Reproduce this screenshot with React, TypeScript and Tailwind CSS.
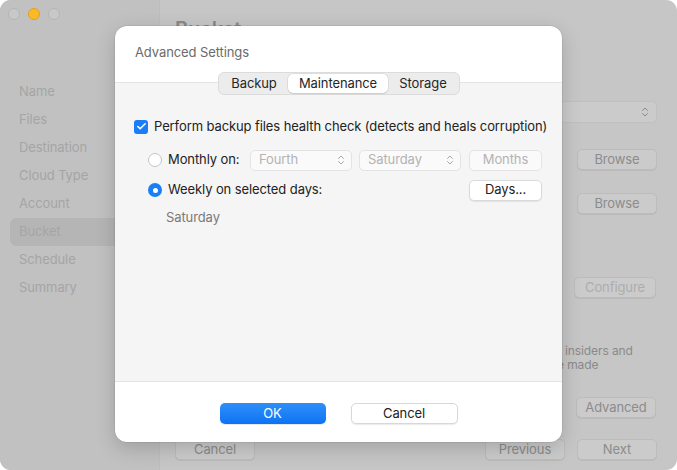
import { ChevronsUpDown, Check } from "lucide-react";

const sidebarItems = ["Name", "Files", "Destination", "Cloud Type", "Account", "Bucket", "Schedule", "Summary"];

function BgButton({ label, className = "", dim = false }: { label: string; className?: string; dim?: boolean }) {
  return (
    <div
      className={
        "flex h-[21px] items-center justify-center rounded-[5px] border border-[#bcbcbc] bg-[#cbcbcb] text-[13px] shadow-[0_1px_0_rgba(0,0,0,0.06)] " +
        (dim ? "text-[#adadad] " : "text-[#8c8c8c] ") +
        className
      }
    >
      {label}
    </div>
  );
}

function Popup({ label, className = "" }: { label: string; className?: string }) {
  return (
    <div
      className={
        "flex h-[21px] items-center justify-between rounded-[5px] border border-[#e3e3e3] bg-[#fafafa] pl-[8px] pr-[4px] text-[13px] text-[#b3b3b3] " +
        className
      }
    >
      <span>{label}</span>
      <ChevronsUpDown size={12} strokeWidth={2} className="text-[#a8a8a8]" />
    </div>
  );
}

function Radio({ on }: { on: boolean }) {
  if (on) {
    return (
      <span className="flex h-[14px] w-[14px] items-center justify-center rounded-full bg-[#1a7ef6]">
        <span className="h-[5px] w-[5px] rounded-full bg-white" />
      </span>
    );
  }
  return <span className="h-[14px] w-[14px] rounded-full border border-[#c4c4c4] bg-white" />;
}

export default function App() {
  return (
    <div className="h-[470px] w-[677px] bg-white font-['Inter','Liberation_Sans',sans-serif] tracking-[-0.1px]">
      <div className="relative flex h-full w-full overflow-hidden rounded-[11px] bg-[#c6c6c6]">
        {/* sidebar */}
        <aside className="flex w-[159px] flex-col bg-[#c1c1c1] px-[10px]">
          <div className="-ml-[2px] flex gap-[8px] pt-[8px]">
            <span className="h-[12px] w-[12px] rounded-full border border-[#b5b5b5] bg-[#c8c8c8]" />
            <span className="h-[12px] w-[12px] rounded-full border border-[#e0a21e] bg-[#fbb928]" />
            <span className="h-[12px] w-[12px] rounded-full border border-[#b5b5b5] bg-[#c8c8c8]" />
          </div>
          <ul className="mt-[58px] flex flex-col">
            {sidebarItems.map((s) => (
              <li
                key={s}
                className={
                  "flex h-[28px] items-center rounded-[6px] pl-[9px] text-[13px] text-[#a5a5a5] " +
                  (s === "Bucket" ? "bg-[#b6b5b6] -mr-[10px] rounded-r-none" : "")
                }
              >
                {s}
              </li>
            ))}
          </ul>
        </aside>

        {/* main (dimmed behind sheet) */}
        <main className="flex flex-1 flex-col border-l border-[#bdbdbd] pl-[15px] pr-[20px]">
          <h1 className="mt-[16px] text-[20px] font-semibold leading-[26px] text-[#8a8a8a]">Bucket</h1>
          <div className="mt-[59px] flex h-[22px] items-center justify-end rounded-[5px] border border-[#c0c0c0] bg-[#cbcbcb] pr-[5px]">
            <ChevronsUpDown size={12} strokeWidth={2} className="text-[#8c8c8c]" />
          </div>
          <div className="mt-[26px] flex justify-end">
            <BgButton label="Browse" className="w-[80px]" />
          </div>
          <div className="mt-[23px] flex justify-end">
            <BgButton label="Browse" className="w-[80px]" />
          </div>
          <div className="mt-[63px] flex justify-end pr-[1px]">
            <BgButton label="Configure" className="w-[82px]" dim />
          </div>
          <div className="mt-[46px] whitespace-nowrap pl-[391px] text-[12px] leading-[14px] text-[#8a8a8a]">
            <div className="-ml-[1px]">insiders and</div>
            <div className="-ml-[9px]">e made</div>
          </div>
          <div className="mt-[25px] flex justify-end pr-[1px]">
            <BgButton label="Advanced" className="w-[80px]" />
          </div>
          <div className="mt-[21px] flex items-center">
            <BgButton label="Cancel" className="w-[80px]" />
            <div className="flex-1" />
            <BgButton label="Previous" className="w-[80px]" />
            <BgButton label="Next" className="ml-[12px] w-[80px]" />
          </div>
        </main>

        {/* sheet */}
        <div className="absolute left-[115px] top-[26px] flex h-[416px] w-[447px] flex-col rounded-[12px] bg-white shadow-[0_6px_20px_rgba(0,0,0,0.18),0_0_0_0.5px_rgba(0,0,0,0.12)]">
          <div className="h-[56px] pl-[20px] pt-[17px] text-[13px] text-[#6b6b6b]">Advanced Settings</div>
          <div className="flex h-[300px] flex-col border-y border-[#e4e4e4] bg-[#f5f5f5] pl-[19px] pr-[20px]">
            <div className="-mt-[11px] ml-[2px] flex self-center rounded-[6px] border border-[#dcdcdc] bg-[#ececec] p-[1px] text-[13px] text-[#262626]">
              <div className="flex h-[19px] w-[68px] items-center justify-center">Backup</div>
              <div className="flex h-[19px] w-[100px] items-center justify-center rounded-[5px] bg-white shadow-[0_0_0_0.5px_rgba(0,0,0,0.12),0_1px_1px_rgba(0,0,0,0.08)]">
                Maintenance
              </div>
              <div className="flex h-[19px] w-[70px] items-center justify-center">Storage</div>
            </div>

            <label className="mt-[22px] flex items-center gap-[6px] whitespace-nowrap text-[13px] text-[#222]">
              <span className="flex h-[14px] w-[14px] shrink-0 items-center justify-center rounded-[3px] bg-[#1a7ef6]">
                <Check size={11} strokeWidth={3.5} className="text-white" />
              </span>
              Perform backup files health check (detects and heals corruption)
            </label>

            <div className="mt-[13px] flex items-center pl-[14px] text-[13px] text-[#222]">
              <Radio on={false} />
              <span className="ml-[6px] w-[82px]">Monthly on:</span>
              <Popup label="Fourth" className="w-[102px]" />
              <Popup label="Saturday" className="ml-[7px] w-[102px]" />
              <div className="ml-[8px] flex h-[21px] flex-1 items-center justify-center rounded-[5px] border border-[#e3e3e3] bg-[#fafafa] text-[13px] text-[#b3b3b3]">
                Months
              </div>
            </div>

            <div className="mt-[9px] flex items-center pl-[14px] text-[13px] text-[#222]">
              <Radio on />
              <span className="ml-[6px] flex-1">Weekly on selected days:</span>
              <div className="flex h-[21px] w-[73px] items-center justify-center rounded-[5px] border border-[#dadada] bg-white text-[13px] text-[#222] shadow-[0_1px_1px_rgba(0,0,0,0.08)]">
                Days...
              </div>
            </div>

            <div className="mt-[7px] pl-[32px] text-[13px] text-[#7a7a7a]">Saturday</div>
          </div>
          <div className="flex flex-1 items-center justify-center gap-[25px] pt-[3px]">
            <div className="flex h-[21px] w-[106px] items-center justify-center rounded-[5px] bg-gradient-to-b from-[#2f8ff9] to-[#0a73f3] text-[13px] text-white shadow-[0_1px_1px_rgba(0,0,0,0.1)]">
              OK
            </div>
            <div className="flex h-[21px] w-[107px] items-center justify-center rounded-[5px] border border-[#d8d8d8] bg-white text-[13px] text-[#222] shadow-[0_1px_1px_rgba(0,0,0,0.08)]">
              Cancel
            </div>
          </div>
        </div>
      </div>
    </div>
  );
}
